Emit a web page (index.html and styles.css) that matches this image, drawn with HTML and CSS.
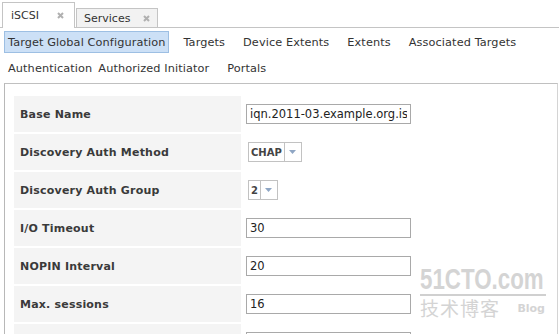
FILE: index.html
```html
<!DOCTYPE html>
<html>
  <head>
    <meta http-equiv="Content-Type" content="text/html; charset=UTF-8" />
    <title>iSCSI - Target Global Configuration</title>
    <link rel="stylesheet" href="styles.css">
  </head>
  <body>
    <div class="tabs">
      <div class="tab active">
        <span>iSCSI</span>
        <svg class="close" width="7" height="7" viewBox="0 0 7 7"><path d="M1 1L6 6M6 1L1 6" /></svg>
      </div>
      <div class="tab services">
        <span>Services</span>
        <svg class="close" width="7" height="7" viewBox="0 0 7 7"><path d="M1 1L6 6M6 1L1 6" /></svg>
      </div>
    </div>

    <div class="subtabs">
      <div class="subrow">
        <a class="subtab selected">Target Global Configuration</a>
        <a class="subtab">Targets</a>
        <a class="subtab">Device Extents</a>
        <a class="subtab">Extents</a>
        <a class="subtab">Associated Targets</a>
      </div>
      <div class="subrow">
        <a class="subtab tight">Authentication</a>
        <a class="subtab">Authorized Initiator</a>
        <a class="subtab">Portals</a>
      </div>
    </div>

    <div class="panel">
      <div class="row">
        <div class="label">Base Name</div>
        <div class="field"><input class="text" type="text" value="iqn.2011-03.example.org.istgt" /></div>
      </div>
      <div class="row">
        <div class="label">Discovery Auth Method</div>
        <div class="field">
          <div class="combo">
            <span class="combo-value">CHAP</span>
            <span class="combo-arrow"><svg width="7" height="4" viewBox="0 0 7 4"><path d="M0 0H7L3.5 4Z" /></svg></span>
          </div>
        </div>
      </div>
      <div class="row">
        <div class="label">Discovery Auth Group</div>
        <div class="field">
          <div class="combo">
            <span class="combo-value">2</span>
            <span class="combo-arrow"><svg width="7" height="4" viewBox="0 0 7 4"><path d="M0 0H7L3.5 4Z" /></svg></span>
          </div>
        </div>
      </div>
      <div class="row">
        <div class="label">I/O Timeout</div>
        <div class="field"><input class="text" type="text" value="30" /></div>
      </div>
      <div class="row">
        <div class="label">NOPIN Interval</div>
        <div class="field"><input class="text" type="text" value="20" /></div>
      </div>
      <div class="row">
        <div class="label">Max. sessions</div>
        <div class="field"><input class="text" type="text" value="16" /></div>
      </div>
      <div class="row">
        <div class="label"></div>
        <div class="field"><input class="text" type="text" value="" /></div>
      </div>
    </div>

    <!-- blog watermark over the bottom right corner -->
    <div class="watermark">
      <div class="wm-logo"><span class="wm-logo-text">51CTO.com</span></div>
      <div class="wm-sub"><span class="wm-cn">技术博客</span><span class="wm-blog">Blog</span></div>
    </div>
  </body>
</html>
```

FILE: styles.css
```css
html, body {
  height: 100%;
  overflow: hidden;
}
body {
  font-family: 'DejaVu Sans', Verdana, sans-serif;
  font-size: 11px;
  color: #333333;
  background-color: #ffffff;
  margin: 0;
  padding: 0;
  position: relative;
}
.tabs {
  display: flex;
  align-items: flex-end;
  height: 25px;
  padding: 2px 0 0 2px;
  border-bottom: 1px solid #c4c4c4;
}
.tab {
  display: flex;
  align-items: center;
  justify-content: space-between;
  box-sizing: border-box;
  padding: 0 10px 0 8px;
  border: 1px solid #c4c4c4;
  border-bottom: none;
  color: #333333;
}
.tab.active {
  width: 73px;
  height: 26px;
  margin-bottom: -1px;
  background-color: #ffffff;
}
.tab.services {
  width: 82px;
  height: 19px;
  margin-left: 1px;
  padding: 0 7px 0 7px;
  background-color: #f2f2f2;
}
.close path {
  stroke: #b0b0b0;
  stroke-width: 2;
  fill: none;
}
.subtabs {
  display: flex;
  flex-direction: column;
  gap: 4px;
  padding: 3px 0 4px 4px;
}
.subrow {
  display: flex;
  gap: 10px;
}
.subtab {
  display: flex;
  align-items: center;
  box-sizing: border-box;
  height: 22px;
  padding: 0 3px;
  border: 1px solid transparent;
  font-size: 11.3px;
  letter-spacing: 0.1px;
  color: #333333;
  cursor: pointer;
}
.subtab.selected {
  background-color: #cce0f6;
  border-color: #9dbfe3;
}
.subtab.tight {
  margin-right: -12px;
}
.panel {
  margin: 0 1px 0 4px;
  height: 400px;
  padding: 12px 0 0 9px;
  border-top: 1px solid #c0c0c0;
  border-left: 1px solid #b8b8b8;
  border-right: 1px solid #d4d4d4;
}
.row {
  display: grid;
  grid-template-columns: 227px auto;
  column-gap: 5px;
  height: 36px;
  margin-bottom: 2px;
}
.label {
  display: flex;
  align-items: center;
  padding-left: 6px;
  background-color: #f4f4f4;
  font-weight: bold;
  letter-spacing: 0.2px;
  color: #3a3a3a;
}
.field {
  display: flex;
  align-items: center;
}
.text {
  box-sizing: border-box;
  width: 165px;
  height: 20px;
  margin: 0;
  padding: 0 3px;
  border: 1px solid #a9a9a9;
  font-family: 'DejaVu Sans', Verdana, sans-serif;
  font-size: 11.5px;
  color: #222222;
  background-color: #ffffff;
  outline: none;
}
.combo {
  display: flex;
  height: 20px;
  box-sizing: border-box;
  margin-left: 2px;
  border: 1px solid #c2c2c2;
  background-color: #ffffff;
}
.combo-value {
  display: flex;
  align-items: center;
  padding: 0 2px;
  border-right: 1px solid #c2c2c2;
  font-size: 10px;
  font-weight: bold;
  color: #444444;
}
.combo-arrow {
  display: flex;
  align-items: center;
  justify-content: center;
  width: 16px;
}
.combo-arrow path {
  fill: #8fa6c4;
}
.watermark {
  position: absolute;
  left: 420px;
  top: 264px;
  width: 126px;
  color: #d4d4d4;
  pointer-events: none;
}
.wm-logo {
  height: 30px;
  border-bottom: 2px solid #d0d0d0;
}
.wm-logo-text {
  display: inline-block;
  font-family: 'Liberation Sans', sans-serif;
  font-weight: bold;
  font-size: 29px;
  line-height: 30px;
  white-space: nowrap;
  transform: scaleX(0.77);
  transform-origin: left center;
}
.wm-sub {
  display: flex;
  justify-content: space-between;
  align-items: center;
  margin-top: 1px;
}
.wm-cn {
  font-family: 'Noto Sans CJK SC', sans-serif;
  font-size: 19px;
  line-height: 22px;
  letter-spacing: 1px;
}
.wm-blog {
  font-family: 'DejaVu Sans', sans-serif;
  font-weight: bold;
  font-size: 11px;
  margin-right: 1px;
}
```
